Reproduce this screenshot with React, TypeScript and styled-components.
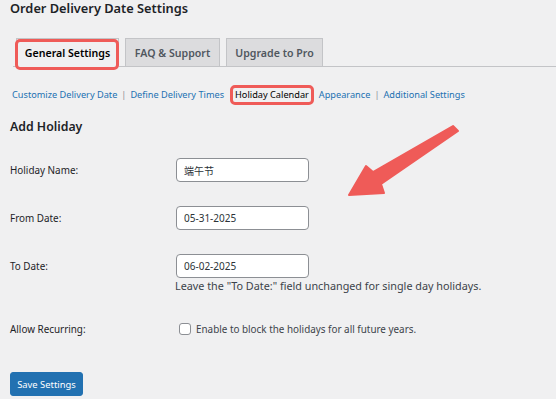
import React from 'react';
import styled, { createGlobalStyle } from 'styled-components';

const GlobalStyle = createGlobalStyle`
  html, body {
    margin: 0;
    padding: 0;
    background: #f0f0f1;
  }
  body {
    font-family: "Noto Sans", "Noto Sans CJK SC", sans-serif;
    color: #1d2327;
  }
`;

const ANNOTATION = '#ef5b58';

const StyledPage = styled.div`
  position: relative;
  width: 556px;
  height: 399px;
  overflow: hidden;
  padding-left: 10px;
  box-sizing: border-box;
`;

const StyledTitle = styled.h1`
  margin: 0;
  font-size: 12.8px;
  line-height: 16px;
  font-weight: 600;
  color: #1d2327;
`;

const StyledTabs = styled.nav`
  display: flex;
  gap: 6px;
  margin-top: 22px;
  margin-left: 3px;
  padding-left: 3px;
  border-bottom: 1px solid #c3c4c7;
`;

const StyledTab = styled.a<{ $active?: boolean; $width: number }>`
  position: relative;
  box-sizing: border-box;
  width: ${(p) => p.$width}px;
  height: 29px;
  display: flex;
  align-items: center;
  justify-content: center;
  font-size: 10.6px;
  font-weight: 600;
  color: ${(p) => (p.$active ? '#000' : '#50575e')};
  background: ${(p) => (p.$active ? '#f0f0f1' : '#dcdcde')};
  border: 1px solid #c3c4c7;
  border-bottom-color: ${(p) => (p.$active ? '#f0f0f1' : '#c3c4c7')};
  margin-bottom: -1px;
  text-decoration: none;

  ${(p) =>
    p.$active &&
    `
    &::after {
      content: '';
      position: absolute;
      top: 0;
      left: -2px;
      right: -1px;
      bottom: -4px;
      border: 3px solid ${ANNOTATION};
      border-radius: 5px;
    }
  `}
`;

const StyledSubNav = styled.ul`
  display: flex;
  align-items: center;
  margin: 18px 0 0 2px;
  padding: 0;
  list-style: none;
  font-size: 9.2px;
  line-height: 20px;
`;

const StyledSubItem = styled.li`
  display: flex;
  align-items: center;
  color: #8c8f94;
`;

const StyledSubLink = styled.a<{ $current?: boolean }>`
  position: relative;
  color: ${(p) => (p.$current ? '#000' : '#2271b1')};
  text-decoration: none;
  padding: 0 ${(p) => (p.$current ? '5px' : '0')};
  margin: 0 ${(p) => (p.$current ? '5px 0 6px' : '0')};

  ${(p) =>
    p.$current &&
    `
    &::after {
      content: '';
      position: absolute;
      inset: 0;
      border: 3px solid ${ANNOTATION};
      border-radius: 5px;
    }
  `}
`;

const StyledSep = styled.span`
  margin: 0 4px;
`;

const StyledHeading = styled.h2`
  margin: 12px 0 0;
  font-size: 12.3px;
  line-height: 20px;
  font-weight: 600;
  color: #1d2327;
`;

const StyledForm = styled.div`
  margin-top: 9px;
`;

const StyledRow = styled.div`
  display: grid;
  grid-template-columns: 166px 1fr;
  align-items: start;
  padding: 12px 0;
`;

const StyledLabel = styled.label`
  font-size: 9.9px;
  line-height: 24px;
  color: #1d2327;
`;

const StyledField = styled.div`
  display: flex;
  flex-direction: column;
  align-items: flex-start;
`;

const StyledInput = styled.input`
  box-sizing: border-box;
  width: 133px;
  height: 24px;
  padding: 0 7px;
  border: 1px solid #8c8f94;
  border-radius: 4px;
  background: #fff;
  font-family: "Noto Sans", "Noto Sans CJK SC", sans-serif;
  font-size: 10px;
  color: #2c3338;
  outline: none;
`;

const StyledDescription = styled.p`
  margin: 1px 0 0 -1px;
  font-size: 10.8px;
  line-height: 14px;
  color: #3c434a;
`;

const StyledCheckLabel = styled.label`
  display: flex;
  align-items: center;
  gap: 5px;
  font-size: 9.9px;
  line-height: 24px;
  color: #3c434a;
  padding-left: 3px;
`;

const StyledCheckbox = styled.span`
  box-sizing: border-box;
  width: 12px;
  height: 12px;
  border: 1px solid #8c8f94;
  border-radius: 3px;
  background: #fff;
`;

const StyledButton = styled.button`
  margin-top: 19px;
  box-sizing: border-box;
  width: 73px;
  height: 24px;
  padding: 0;
  border: 1px solid #2271b1;
  border-radius: 3px;
  background: #2271b1;
  color: #fff;
  font-family: "Noto Sans", sans-serif;
  font-size: 9.4px;
  cursor: pointer;
`;

const StyledArrow = styled.svg`
  position: absolute;
  left: 0;
  top: 0;
  pointer-events: none;
`;

const CURRENT = 'Holiday Calendar';

const subLinks = [
  'Customize Delivery Date',
  'Define Delivery Times',
  CURRENT,
  'Appearance',
  'Additional Settings',
];

export default function App() {
  return (
    <>
      <GlobalStyle />
      <StyledPage>
        <StyledTitle>Order Delivery Date Settings</StyledTitle>

        <StyledTabs>
          <StyledTab $active $width={103}>General Settings</StyledTab>
          <StyledTab $width={95}>FAQ &amp; Support</StyledTab>
          <StyledTab $width={97}>Upgrade to Pro</StyledTab>
        </StyledTabs>

        <StyledSubNav>
          {subLinks.map((label, i) => {
            const current = label === CURRENT;
            const last = i === subLinks.length - 1;
            const showSep = !last && !current && subLinks[i + 1] !== CURRENT;
            return (
              <StyledSubItem key={label}>
                <StyledSubLink $current={current}>{label}</StyledSubLink>
                {showSep && <StyledSep>|</StyledSep>}
              </StyledSubItem>
            );
          })}
        </StyledSubNav>

        <StyledHeading>Add Holiday</StyledHeading>

        <StyledForm>
          <StyledRow>
            <StyledLabel>Holiday Name:</StyledLabel>
            <StyledField>
              <StyledInput defaultValue="端午节" />
            </StyledField>
          </StyledRow>
          <StyledRow>
            <StyledLabel>From Date:</StyledLabel>
            <StyledField>
              <StyledInput defaultValue="05-31-2025" />
            </StyledField>
          </StyledRow>
          <StyledRow>
            <StyledLabel>To Date:</StyledLabel>
            <StyledField>
              <StyledInput defaultValue="06-02-2025" />
              <StyledDescription>
                Leave the "To Date:" field unchanged for single day holidays.
              </StyledDescription>
            </StyledField>
          </StyledRow>
          <StyledRow>
            <StyledLabel>Allow Recurring:</StyledLabel>
            <StyledCheckLabel>
              <StyledCheckbox />
              Enable to block the holidays for all future years.
            </StyledCheckLabel>
          </StyledRow>
        </StyledForm>

        <StyledButton>Save Settings</StyledButton>

        <StyledArrow width="556" height="399" viewBox="0 0 556 399">
          <path
            d="M453 126 L458 131 L381 184 L384 193 L349 195 L366 166 L373 172 Z"
            fill={ANNOTATION}
            stroke={ANNOTATION}
            strokeWidth="2"
            strokeLinejoin="round"
          />
        </StyledArrow>
      </StyledPage>
    </>
  );
}
